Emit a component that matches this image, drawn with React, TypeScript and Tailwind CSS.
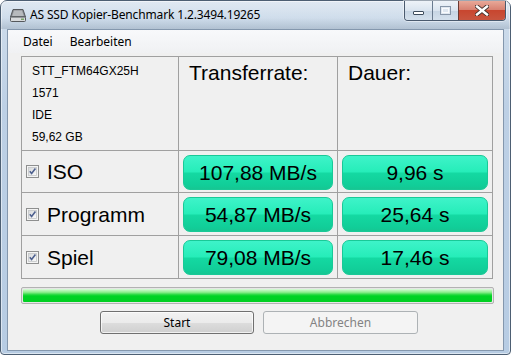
import { Fragment } from "react";
import type { ReactNode } from "react";

const rows = [
    { label: "ISO", rate: "107,88 MB/s", time: "9,96 s" },
    { label: "Programm", rate: "54,87 MB/s", time: "25,64 s" },
    { label: "Spiel", rate: "79,08 MB/s", time: "17,46 s" },
];

function DriveIcon() {
    return (
        <svg width="16" height="14" viewBox="0 0 16 14" className="shrink-0">
            <path d="M3 1.5 H13 L15.5 9 H0.5 Z" fill="#8a8d91" stroke="#55585c" strokeWidth="1" />
            <path d="M4 2.5 H12 L13.8 8 H2.2 Z" fill="#b7babd" />
            <rect x="0.5" y="9" width="15" height="4.5" rx="1" fill="#d8dadc" stroke="#55585c" strokeWidth="1" />
            <rect x="11" y="10.5" width="3" height="1.5" fill="#7aa36a" />
        </svg>
    );
}

function CaptionButtons() {
    return (
        <div className="ml-auto mr-[4px] flex h-[20px] overflow-hidden rounded-b-[4px] border border-t-0 border-[#4a5a6e] shadow-[0_0_0_1px_rgba(255,255,255,0.45)]">
            <div className="flex w-[27px] items-end justify-center pb-[5px] bg-[linear-gradient(to_bottom,#eef3f8_0%,#dae4ef_50%,#c6d4e3_51%,#d4e0ec_100%)]">
                <div className="h-[4px] w-[11px] rounded-[1px] border border-[#3e4c5c] bg-white" />
            </div>
            <div className="flex w-[26px] items-center justify-center border-l border-[#6a7b8f] bg-[linear-gradient(to_bottom,#eef3f8_0%,#dae4ef_50%,#c6d4e3_51%,#d4e0ec_100%)]">
                <div className="h-[9px] w-[11px] border border-[#8796a8] bg-[#dfe7f0] p-[1px]">
                    <div className="h-full w-full border border-white/80" />
                </div>
            </div>
            <div className="flex w-[47px] items-center justify-center border-l border-[#6a3a33] bg-[linear-gradient(to_bottom,#e8a898_0%,#d88272_45%,#c8462f_50%,#c8553f_100%)]">
                <svg width="14" height="11" viewBox="0 0 14 11">
                    <path d="M2 1.5 L12 9.5 M12 1.5 L2 9.5" stroke="#40302c" strokeWidth="4.2" strokeLinecap="square" />
                    <path d="M2 1.5 L12 9.5 M12 1.5 L2 9.5" stroke="#ffffff" strokeWidth="2.4" strokeLinecap="square" />
                </svg>
            </div>
        </div>
    );
}

function CheckBox() {
    return (
        <svg width="13" height="13" viewBox="0 0 13 13" className="shrink-0">
            <defs>
                <linearGradient id="cb" x1="0" y1="0" x2="1" y2="1">
                    <stop offset="0" stopColor="#d6d8da" />
                    <stop offset="1" stopColor="#fbfbfb" />
                </linearGradient>
            </defs>
            <rect x="0.5" y="0.5" width="12" height="12" fill="#f4f4f4" stroke="#8e8f8f" />
            <rect x="2.5" y="2.5" width="8" height="8" fill="url(#cb)" stroke="#c4c6c8" strokeWidth="0.8" />
            <path d="M3.8 6.3 L5.6 8.4 L9.4 3.6" fill="none" stroke="#4c5f8e" strokeWidth="1.6" />
        </svg>
    );
}

function ValueBox({ children }: { children: ReactNode }) {
    return (
        <div className="mx-[4px] mt-[4px] flex h-[35px] items-center justify-center rounded-[7px] border border-[#19c997] bg-[linear-gradient(to_bottom,#3ef3c9_0%,#26edb9_48%,#14d9a2_52%,#11cd98_90%,#16c692_100%)] text-[21px] leading-none text-black">
            {children}
        </div>
    );
}

function Button({ label, disabled }: { label: string; disabled?: boolean }) {
    return (
        <div
            className={
                disabled
                    ? "flex h-[23px] w-[155px] items-center justify-center rounded-[3px] border border-[#adb2b5] bg-[#f4f4f4] text-[12px] text-[#838383]"
                    : "flex h-[23px] w-[154px] items-center justify-center rounded-[3px] border border-[#707070] bg-[linear-gradient(to_bottom,#f2f2f2_0%,#ebebeb_50%,#dddddd_51%,#cfcfcf_100%)] text-[12px] text-black shadow-[inset_0_0_0_1px_rgba(255,255,255,0.7)]"
            }
        >
            {label}
        </div>
    );
}

export default function App() {
    return (
        <div className="h-[357px] w-[516px] overflow-hidden bg-white font-['Noto_Sans',sans-serif]">
            <div className="flex h-[355px] w-[511px] flex-col rounded-t-[7px] rounded-b-[4px] border border-[#4d5f73] bg-[linear-gradient(to_bottom,#d6e2ee_0%,#cbdaea_8%,#bdd0e5_30%,#b7cce3_100%)] shadow-[inset_0_0_0_1px_rgba(255,255,255,0.5)]">
                <div className="flex h-[28px] shrink-0 items-start bg-[linear-gradient(to_bottom,rgba(255,255,255,0.25),rgba(255,255,255,0)_60%,rgba(60,80,100,0.18)_100%)]">
                    <div className="ml-[9px] mt-[7px] flex items-center gap-[4px]">
                        <DriveIcon />
                        <span className="text-[12px] leading-none text-black tracking-[-0.15px]">
                            AS SSD Kopier-Benchmark 1.2.3494.19265
                        </span>
                    </div>
                    <CaptionButtons />
                </div>

                <div className="mx-[6px] flex h-[322px] flex-col border border-[#8497ad] bg-[#f0f0f0]">
                    <div className="flex h-[23px] items-center gap-[17px] pl-[15px] text-[12px] text-black bg-[linear-gradient(to_bottom,#f8f9fb,#f0f1f3)]">
                        <span>Datei</span>
                        <span>Bearbeiten</span>
                    </div>

                    <div className="ml-[13px] mt-[3px] grid w-[472px] grid-cols-[156px_158px_154px] grid-rows-[93px_41px_42px_42px] gap-px bg-[#a0a0a0] p-px font-['Liberation_Sans',Arial,sans-serif] text-black">
                        <div className="bg-[#f0f0f0] pl-[10px] pt-[3px] text-[12px] leading-[22px]">
                            <div>STT_FTM64GX25H</div>
                            <div>1571</div>
                            <div>IDE</div>
                            <div>59,62 GB</div>
                        </div>
                        <div className="bg-[#f0f0f0] pl-[10px] pt-[5px] text-[21px] leading-none">
                            Transferrate:
                        </div>
                        <div className="bg-[#f0f0f0] pl-[10px] pt-[5px] text-[21px] leading-none">
                            Dauer:
                        </div>

                        {rows.map((row) => (
                            <Fragment key={row.label}>
                                <div className="flex items-center gap-[8px] bg-[#f0f0f0] pl-[4px] text-[21px] leading-none">
                                    <CheckBox />
                                    <span>{row.label}</span>
                                </div>
                                <div className="bg-[#f0f0f0]">
                                    <ValueBox>{row.rate}</ValueBox>
                                </div>
                                <div className="bg-[#f0f0f0]">
                                    <ValueBox>{row.time}</ValueBox>
                                </div>
                            </Fragment>
                        ))}
                    </div>

                    <div className="ml-[13px] mt-[8px] h-[17px] w-[473px] rounded-[2px] border border-[#b2b2b2] bg-[#e6e6e6] p-px">
                        <div className="h-full w-full rounded-[1px] bg-[linear-gradient(to_bottom,#d9fbd9_0%,#8fee8f_25%,#1fd83a_45%,#00d324_55%,#00cf22_100%)]" />
                    </div>

                    <div className="ml-[92px] mt-[7px] flex gap-[9px]">
                        <Button label="Start" />
                        <Button label="Abbrechen" disabled />
                    </div>
                </div>
            </div>
        </div>
    );
}
